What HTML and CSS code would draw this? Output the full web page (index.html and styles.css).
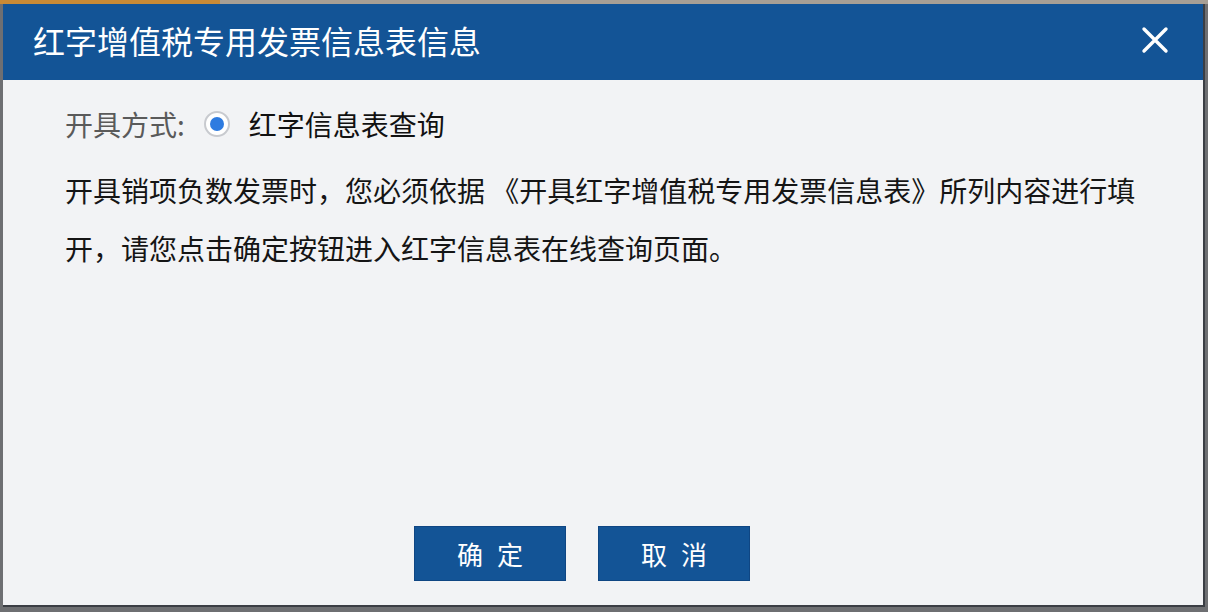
FILE: index.html
```html
<!DOCTYPE html>
<html lang="zh-CN">
<head>
<meta charset="utf-8">
<title>红字增值税专用发票信息表信息</title>
<link rel="stylesheet" href="styles.css">
</head>
<body>
<div class="topstrip"></div>
<div class="dialog">
  <div class="header">
    <div class="title">红字增值税专用发票信息表信息</div>
    <div class="close" aria-label="关闭">
      <svg width="28" height="28" viewBox="0 0 28 28"><path d="M3 3 L25 25 M25 3 L3 25" stroke="#fff" stroke-width="3.4" stroke-linecap="round" fill="none"/></svg>
    </div>
  </div>
  <div class="content">
    <div class="row">
      <span class="label">开具方式:</span>
      <span class="radio"><span class="dot"></span></span>
      <span class="option">红字信息表查询</span>
    </div>
    <p class="text">开具销项负数发票时，您必须依据 《开具红字增值税专用发票信息表》所列内容进行填开，请您点击确定按钮进入红字信息表在线查询页面。</p>
    <div class="actions">
      <button class="btn">确 定</button>
      <button class="btn">取 消</button>
    </div>
  </div>
</div>
</body>
</html>
```

FILE: styles.css
```css
html, body {
  margin: 0;
  padding: 0;
}
body {
  width: 1208px;
  height: 612px;
  overflow: hidden;
  background: #6e6f72;
  font-family: "Noto Sans CJK SC", "Noto Sans", sans-serif;
}
.topstrip {
  height: 4px;
  background: linear-gradient(to right, #c98a35 0, #c98a35 220px, #a79f95 220px, #a79f95 100%);
}
.dialog {
  margin-left: 3px;
  width: 1200px;
  height: 601px;
  border-right: 2px solid #3b3e44;
  border-bottom: 2px solid #3b3e44;
  background: #f2f3f5;
  display: flex;
  flex-direction: column;
}
.header {
  height: 76px;
  background: #135496;
  display: flex;
  align-items: center;
  justify-content: space-between;
  padding: 0 34px 0 30px;
  box-sizing: border-box;
}
.title {
  color: #fff;
  font-size: 32px;
  line-height: 76px;
  margin-top: -4px;
}
.close {
  width: 28px;
  height: 28px;
  margin-top: -4px;
  display: flex;
}
.content {
  flex: 1;
  display: flex;
  flex-direction: column;
  padding: 24px 0 24px 62px;
}
.row {
  display: flex;
  align-items: center;
  height: 40px;
  font-size: 28px;
}
.label {
  color: #5a5a5a;
}
.radio {
  width: 26px;
  height: 26px;
  box-sizing: border-box;
  border: 2px solid #c8cacf;
  border-radius: 50%;
  background: #fff;
  display: flex;
  align-items: center;
  justify-content: center;
  margin: 0 19px 0 19px;
}
.dot {
  width: 14px;
  height: 14px;
  border-radius: 50%;
  background: #2e7be0;
}
.option {
  color: #111;
}
.text {
  margin: 17px 0 0 0;
  width: 1090px;
  font-size: 28px;
  line-height: 58px;
  color: #151515;
}
.actions {
  margin-top: auto;
  display: flex;
  gap: 32px;
  padding-left: 349px;
}
.btn {
  width: 152px;
  height: 55px;
  background: #135496;
  border: 1px solid #0f4683;
  color: #fff;
  font-family: "Noto Sans CJK SC", "Noto Sans", sans-serif;
  font-size: 26px;
  letter-spacing: 4px;
  padding: 0 0 0 4px;
  cursor: pointer;
}
```
